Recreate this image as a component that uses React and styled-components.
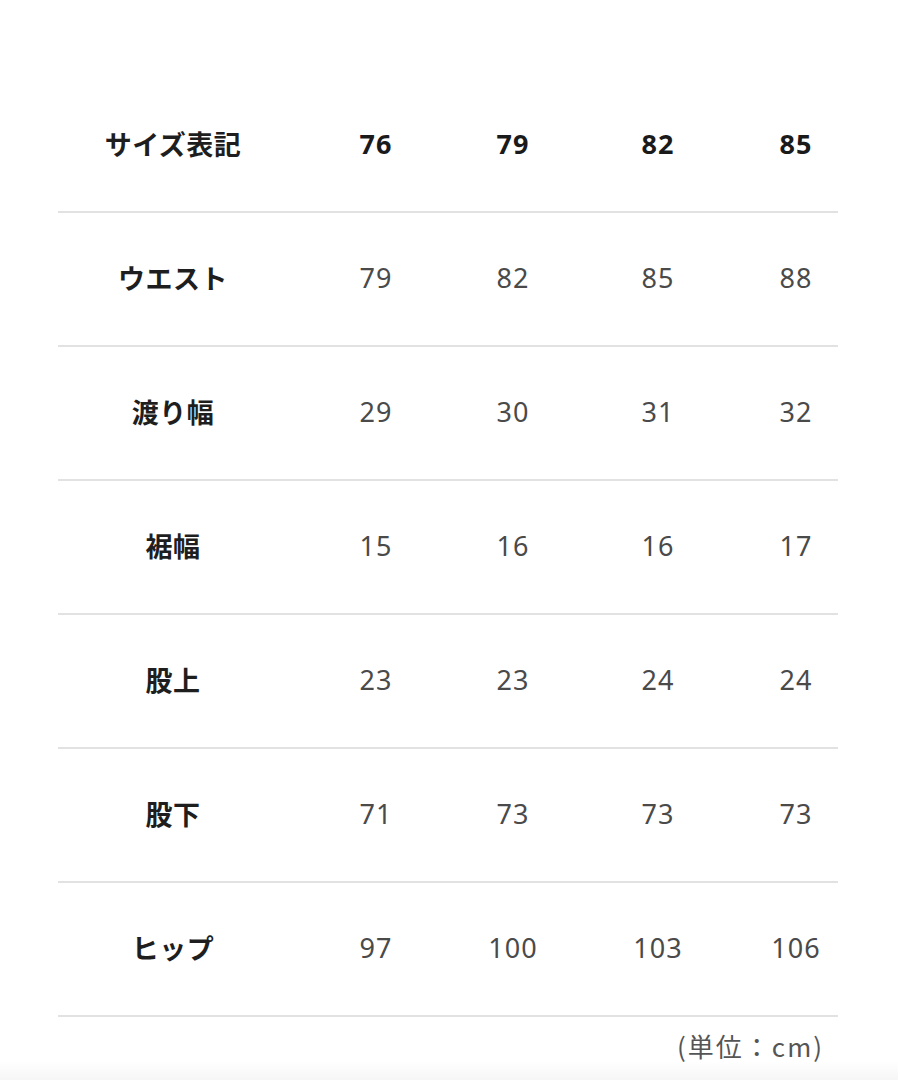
import styled, { createGlobalStyle } from "styled-components";

const GlobalStyle = createGlobalStyle`
    html, body {
        margin: 0;
        padding: 0;
        background: #ffffff;
    }
    body {
        font-family: "Noto Sans", "Noto Sans CJK JP", sans-serif;
        color: #222;
    }
`;

const Page = styled.div`
    width: 898px;
    min-height: 1080px;
    box-sizing: border-box;
    padding: 79px 0 0 58px;
    background: linear-gradient(to bottom, #fff 0, #fff 1062px, #f6f6f6 1080px);
`;

const Table = styled.div`
    width: 780px;
`;

const Row = styled.div`
    display: grid;
    grid-template-columns: 248px 140px 134px 156px 120px;
    align-items: center;
    height: 132px;
    box-sizing: content-box;
    padding-bottom: 0;
    border-bottom: 2px solid #e2e2e2;
    & > * {
        margin-bottom: 4px;
    }
`;

const Label = styled.div`
    padding-right: 18px;
    text-align: center;
    font-family: "Noto Sans CJK JP", sans-serif;
    font-weight: 700;
    font-size: 27px;
    letter-spacing: 0.5px;
    color: #1e1e1e;
`;

const Cell = styled.div`
    text-align: center;
    font-family: "Noto Sans", "Noto Sans CJK JP", sans-serif;
    font-size: 27px;
    letter-spacing: 1px;
    font-weight: ${(p) => (p.$head ? 700 : 400)};
    color: ${(p) => (p.$head ? "#1a1a1a" : "#4a4a4a")};
`;

const Unit = styled.div`
    width: 780px;
    padding-top: 10px;
    padding-right: 14px;
    box-sizing: border-box;
    text-align: right;
    font-family: "Noto Sans CJK JP", sans-serif;
    font-size: 26px;
    letter-spacing: 2px;
    color: #555;
`;

const sizes = ["76", "79", "82", "85"];

const rows = [
    ["ウエスト", ["79", "82", "85", "88"]],
    ["渡り幅", ["29", "30", "31", "32"]],
    ["裾幅", ["15", "16", "16", "17"]],
    ["股上", ["23", "23", "24", "24"]],
    ["股下", ["71", "73", "73", "73"]],
    ["ヒップ", ["97", "100", "103", "106"]],
];

const App = () => {
    return (
        <Page>
            <GlobalStyle />
            <Table>
                <Row>
                    <Label>サイズ表記</Label>
                    {sizes.map((s) => (
                        <Cell key={s} $head>
                            {s}
                        </Cell>
                    ))}
                </Row>
                {rows.map(([name, vals]) => (
                    <Row key={name}>
                        <Label>{name}</Label>
                        {vals.map((v, i) => (
                            <Cell key={i}>{v}</Cell>
                        ))}
                    </Row>
                ))}
            </Table>
            <Unit>(単位：cm)</Unit>
        </Page>
    );
};

export default App;
